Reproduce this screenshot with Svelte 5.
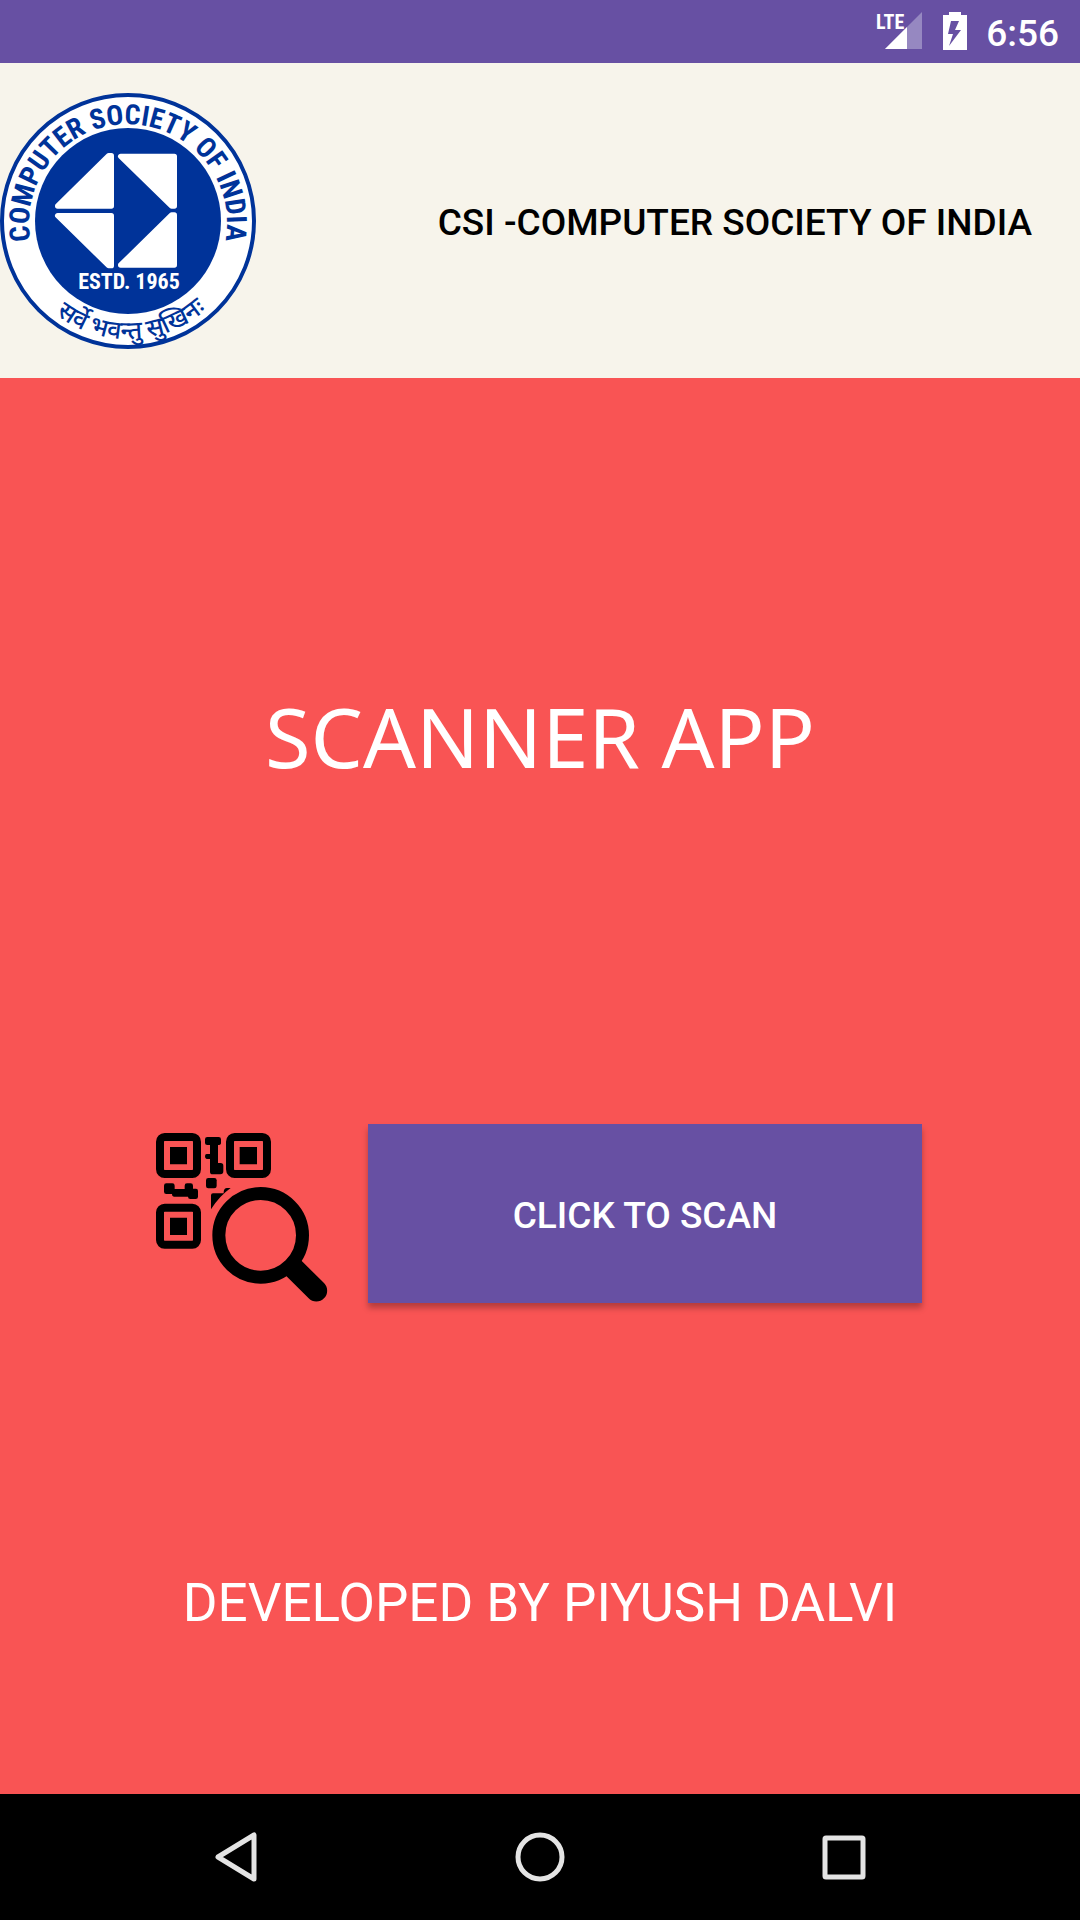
<script>
  const brand = 'COMPUTER SOCIETY OF INDIA';
  let scanning = $state(false);
</script>

<div class="screen">
  <div class="status">
    <svg class="signal" viewBox="0 0 48 38" aria-label="LTE signal">
      <path d="M46 0V37H9Z" fill="#9688c1" />
      <path d="M31 15V37H9Z" fill="#fff" />
      <path d="M0 0H26V18H0Z" fill="#6750a3" />
      <text x="0" y="17" class="lte">LTE</text>
    </svg>
    <svg class="battery" viewBox="0 0 24 38" aria-label="Battery charging">
      <path d="M6 0H18V3H24V38H0V3H6Z" fill="#fff" />
      <path d="M8 9H16L12 18H18L6 34L10 22H5Z" fill="#6750a3" />
    </svg>
    <span class="time">6:56</span>
  </div>

  <header>
    <svg class="logo" viewBox="0 0 256 256" role="img" aria-label={brand}>
      <defs>
        <path id="arc-top" d="M31 150A99 99 0 1 1 225 150" />
        <path id="arc-bottom" d="M10 128A118 118 0 0 0 246 128" />
      </defs>
      <circle cx="128" cy="128" r="126" fill="#fff" stroke="#003399" stroke-width="4" />
      <circle cx="128" cy="128" r="93" fill="#003399" />
      <g
        transform="translate(0 -12) scale(.33333)"
        fill="#fff"
        stroke="#fff"
        stroke-width="16"
        stroke-linejoin="round"
      >
        <path d="M173 375L326 224H334V375Z" />
        <path d="M362 226H523V375H515Z" />
        <path d="M173 404H334V554H326Z" />
        <path d="M523 402V552H362L515 402Z" />
      </g>
      <text class="estd" x="129" y="196">ESTD. 1965</text>
      <text class="ring">
        <textPath href="#arc-top" startOffset="50%">{brand}</textPath>
      </text>
      <text class="motto">
        <textPath href="#arc-bottom" startOffset="51%">सर्वे भवन्तु सुखिनः</textPath>
      </text>
    </svg>
    <span class="name">CSI -{brand}</span>
  </header>

  <main>
    <h1>SCANNER APP</h1>
    <div class="scan">
      <svg class="qr" viewBox="48 27 516 537" aria-hidden="true">
        <g fill="none" stroke="#000" stroke-width="24">
          <rect x="60" y="66" width="111" height="111" rx="14" />
          <rect x="270" y="66" width="111" height="111" rx="14" />
          <rect x="60" y="278" width="111" height="111" rx="14" />
        </g>
        <path d="M90 96h51v52H90zM299 96h52v52h-52zM90 308h51v52H90z" />
        <path
          d="M202 66H236Q243 66 243 73V84Q243 90 234 90V144H242Q250 144 250 152V169Q250 178 241 178H218Q210 178 210 170V132H200Q195 132 195 124Q195 117 200 117H210V90H202Q195 90 195 84V73Q195 66 202 66Z"
        />
        <rect x="198" y="189" width="32" height="31" rx="7" />
        <path
          d="M79 205H97Q104 205 104 212V222H134V212Q134 205 141 205H152Q159 205 159 212V221H168Q174 221 174 228V245Q174 252 167 252H151Q144 252 144 245H103Q96 245 96 237H79Q72 237 72 230V212Q72 205 79 205Z"
        />
        <path d="M213 283V241Q213 235 219 235H251V231Q252 219 261 219H272Q237 244 213 283Z" />
        <circle cx="362" cy="361" r="125.500" fill="none" stroke="#000" stroke-width="39" />
        <path d="M432 476L477 430L552 504A32 32 0 0 1 506 550Z" />
      </svg>
      <button class="go" type="button" onclick={() => (scanning = true)}>CLICK TO SCAN</button>
    </div>
    <p>DEVELOPED BY PIYUSH DALVI</p>
  </main>

  <nav>
    <button type="button" aria-label="Back">
      <svg viewBox="0 0 50 50"><path d="M7 25L43 3V47Z" /></svg>
    </button>
    <button type="button" aria-label="Home">
      <svg viewBox="0 0 50 50"><circle cx="25" cy="25" r="22" /></svg>
    </button>
    <button type="button" aria-label="Recent apps">
      <svg viewBox="0 0 50 50"><rect x="6" y="6" width="38" height="39" rx="1" /></svg>
    </button>
  </nav>
</div>

<style>
  :global(body) {
    margin: 0;
  }
  .screen {
    min-height: 100vh;
    display: flex;
    flex-direction: column;
    background: #f95454;
    font-family: Roboto, 'Liberation Sans', sans-serif;
  }
  svg {
    display: block;
    flex: none;
  }
  button {
    border: 0;
    padding: 0;
    font: inherit;
    color: inherit;
    cursor: pointer;
  }
  .status {
    height: 63px;
    box-sizing: border-box;
    padding: 12px 21px 0 0;
    display: flex;
    align-items: flex-start;
    justify-content: flex-end;
    gap: 19px;
    background: #6750a3;
    color: #fff;
  }
  .signal {
    width: 48px;
    height: 38px;
    overflow: visible;
  }
  .lte {
    font: bold 20px 'Liberation Sans Narrow', 'Roboto Condensed', Roboto, sans-serif;
    fill: #fff;
  }
  .battery {
    width: 24px;
    height: 38px;
  }
  .time {
    font-size: 37px;
    font-weight: 500;
    line-height: 43px;
  }
  header {
    height: 315px;
    box-sizing: border-box;
    padding-right: 48px;
    display: flex;
    align-items: center;
    justify-content: space-between;
    background: #f7f4eb;
  }
  .logo {
    width: 256px;
    height: 256px;
  }
  .logo text {
    font-family: 'Liberation Sans Narrow', 'Roboto Condensed', Roboto, 'Noto Sans', sans-serif;
    font-weight: bold;
    text-anchor: middle;
  }
  .logo .estd {
    font-size: 22px;
    fill: #fff;
  }
  .logo .ring {
    font-size: 28px;
    fill: #003399;
  }
  .logo .motto {
    font-size: 25px;
    font-weight: 500;
    fill: #003399;
  }
  .name {
    padding-top: 4px;
    font-size: 37px;
    font-weight: 500;
    line-height: 44px;
    color: #000;
  }
  main {
    flex: 1;
    display: flex;
    flex-direction: column;
    align-items: center;
    color: #fff;
  }
  h1 {
    margin: 300px 0 330px;
    font: 400 83px/116px 'Noto Sans', sans-serif;
  }
  .scan {
    display: flex;
    align-items: center;
    gap: 40px;
    padding-right: 2px;
  }
  .qr {
    width: 172px;
    height: 179px;
  }
  .go {
    width: 554px;
    height: 179px;
    padding-top: 4px;
    background: #6750a3;
    color: #fff;
    font-size: 37px;
    font-weight: 500;
    box-shadow: 0 5px 6px rgba(0, 0, 0, 0.28);
  }
  p {
    margin: 268px 0 0;
    font-size: 53px;
    line-height: 64px;
  }
  nav {
    height: 126px;
    box-sizing: border-box;
    padding: 0 84px;
    display: flex;
    background: #000;
  }
  nav button {
    flex: 1;
    display: flex;
    align-items: center;
    justify-content: center;
    background: none;
  }
  nav svg {
    width: 50px;
    height: 50px;
    fill: none;
    stroke: #e4e4e4;
    stroke-width: 5;
    stroke-linejoin: round;
  }
</style>
